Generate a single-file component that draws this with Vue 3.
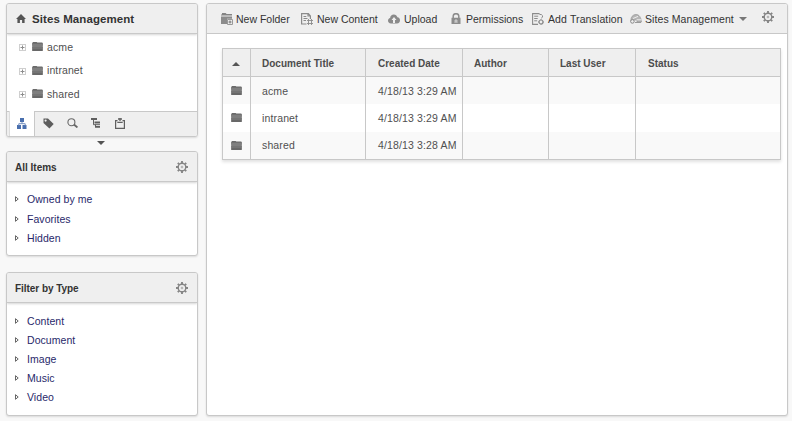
<script setup>
import { h } from 'vue'

const sites = ['acme', 'intranet', 'shared']
const filters = ['Content', 'Document', 'Image', 'Music', 'Video']
const items = ['Owned by me', 'Favorites', 'Hidden']
const rows = [
  { title: 'acme', date: '4/18/13 3:29 AM' },
  { title: 'intranet', date: '4/18/13 3:29 AM' },
  { title: 'shared', date: '4/18/13 3:28 AM' },
]

const Gear = () =>
  h('svg', { width: 12, height: 12, viewBox: '0 0 12 12', fill: 'none', stroke: '#858585' }, [
    h('circle', { cx: 6, cy: 6, r: 3.8, 'stroke-width': 1.4 }),
    h('circle', { cx: 6, cy: 6, r: 0.9, 'stroke-width': 0.6 }),
    h('path', {
      'stroke-width': 1.9,
      d: 'M6 0v2M6 10v2M0 6h2M10 6h2M1.8 1.8l1.3 1.3M8.9 8.9l1.3 1.3M1.8 10.2l1.3-1.3M8.9 3.1l1.3-1.3',
    }),
  ])

const Folder = () =>
  h('svg', { width: 11, height: 9, viewBox: '0 0 11 9' }, [
    h('path', { d: 'M.5 2V.5L1 0h3.6l.7.6H10.4V2z', fill: '#6a6a6a' }),
    h('path', { d: 'M0 1.5h11L10.6 9H.4z', fill: '#7f7f7f' }),
    h('path', { d: 'M0 1.5h11v.6H0z', fill: '#6a6a6a' }),
    h('path', { d: 'M.2 5h10.6l-.1 2H.3z', fill: '#757575' }),
    h('path', { d: 'M.3 7h10.4l-.1 2H.4z', fill: '#686868' }),
  ])
</script>

<template>
  <div class="page">
    <aside class="side">
      <section class="panel sites">
        <header class="head main">
          <svg width="10" height="9" viewBox="0 0 10 9" fill="#555">
            <path d="M5 0l5 5H8.6v4H6.1V6H3.9v3H1.4V5H0z" />
          </svg>
          <h1>Sites Management</h1>
        </header>
        <ul class="tree">
          <li v-for="s in sites" :key="s">
            <svg class="plus" width="7" height="7" viewBox="0 0 7 7">
              <path d="M0 .5h7M0 6.5h7M.5 0v7M6.5 0v7" stroke="#cfcfcf" fill="none" />
              <path d="M1.5 3.5h4M3.5 1.5v4" stroke="#8d8d8d" />
            </svg>
            <Folder />
            <span>{{ s }}</span>
          </li>
        </ul>
        <nav class="tabs">
          <span class="tab active">
            <svg width="10" height="11" viewBox="0 0 10 11" fill="#496fae">
              <path d="M3 0h4v4H3zM0 7h4v4H0zM5.5 7h4v4h-4z" />
              <path d="M5 4v2M1.8 7.5V5.7h6.4v1.8" fill="none" stroke="#7792c0" />
            </svg>
          </span>
          <span class="tab">
            <svg width="11" height="11" viewBox="0 0 11 11">
              <path d="M.5.5H5L10.7 6 6.4 10.6.5 5z" fill="#5d5d5d" />
              <circle cx="2.6" cy="2.6" r="1.1" fill="#efefef" />
            </svg>
          </span>
          <span class="tab">
            <svg width="11" height="10" viewBox="0 0 11 10" fill="none" stroke="#686868">
              <circle cx="4.4" cy="4.2" r="3.5" stroke-width="1.1" />
              <path d="M7 6.5l3.4 3" stroke-width="1.8" />
            </svg>
          </span>
          <span class="tab">
            <svg width="10" height="10" viewBox="0 0 10 10" fill="none" stroke="#5f5f5f">
              <path d="M0 1h6M3.5 4.5H9M4 8.8h5" stroke-width="1.8" />
              <path d="M2.5 1v5.7H9" />
              <path d="M4.5 6.5v2" />
            </svg>
          </span>
          <span class="tab">
            <svg width="10" height="11" viewBox="0 0 10 11" fill="none" stroke="#606060">
              <path d="M2.5 2.6H.6v7.8h8.8V2.6H7.5" stroke-width="1.2" />
              <path d="M3 1h4M5 0v3M2.3 4.3h5.4" stroke-width="1.3" />
            </svg>
          </span>
        </nav>
      </section>
      <div class="fold"><i class="down dark"></i></div>
      <section class="panel items">
        <header class="head"><h2>All Items</h2><Gear /></header>
        <ul class="links">
          <li v-for="t in items" :key="t">
            <svg width="4" height="6" viewBox="0 0 4 6"><path d="M.5.7L3.2 3 .5 5.3z" fill="#fff" stroke="#555" stroke-width=".9" /></svg>
            <a>{{ t }}</a>
          </li>
        </ul>
      </section>
      <section class="panel types">
        <header class="head"><h2>Filter by Type</h2><Gear /></header>
        <ul class="links">
          <li v-for="t in filters" :key="t">
            <svg width="4" height="6" viewBox="0 0 4 6"><path d="M.5.7L3.2 3 .5 5.3z" fill="#fff" stroke="#555" stroke-width=".9" /></svg>
            <a>{{ t }}</a>
          </li>
        </ul>
      </section>
    </aside>

    <main class="panel content">
      <div class="toolbar">
        <span class="tool folder">
          <svg width="12" height="12" viewBox="0 0 12 12">
            <path d="M0 11V3.5h11v2.3H6V11z" fill="#8c8c8c" />
            <path d="M1 0h3.6l1 1H11v1.6H0V1.5h1z" fill="#848484" />
            <path d="M6.5 6.5h5v5h-5z" fill="#eee" stroke="#999" />
            <path d="M7.5 9h3M9 7.5v3" stroke="#777" />
          </svg>
          New Folder
        </span>
        <span class="tool doc">
          <svg width="12" height="12" viewBox="0 0 12 12" fill="none" stroke="#8b8b8b">
            <path d="M5.5 11H.6V.6h6.8L9.4 3v3M7 .6V3h2.4" stroke-width="1.2" />
            <path d="M2.5 3.5h2.8M2.5 5.5h4M2.5 7.5h2.5" />
            <path d="M7.5 6v6M10.5 6v6M6 7.5h6M6 10.5h6" stroke-width=".9" />
          </svg>
          New Content
        </span>
        <span class="tool upload">
          <svg width="12" height="10" viewBox="0 0 12 10">
            <path d="M3 9.5C1 9.5 0 8.2 0 6.6c0-1.4.9-2.3 2.1-2.6C2.3 1.7 3.8.4 5.8.4c1.8 0 3.1 1.1 3.6 2.8C11 3.3 12 4.5 12 6.2c0 1.9-1.1 3.3-3 3.3z" fill="#8a8a8a" />
            <path d="M6 3L3.5 6H5v3h2V6h1.5z" fill="#efefef" />
          </svg>
          Upload
        </span>
        <span class="tool perm">
          <svg width="10" height="11" viewBox="0 0 10 11">
            <path d="M2.2 5V3.2a2.8 2.5 0 015.6 0V5" fill="none" stroke="#8c8c8c" stroke-width="1.5" />
            <path d="M.5 4.7h9V11h-9z" fill="#8c8c8c" />
            <path d="M3 7h4v3H3z" fill="#a9a9a9" />
            <path d="M4.5 6.3h1v3.2h-1z" fill="#e4e4e4" />
          </svg>
          Permissions
        </span>
        <span class="tool trans">
          <svg width="12" height="12" viewBox="0 0 12 12" fill="none" stroke="#8b8b8b">
            <path d="M6 11.4H.6V.6h7" stroke-width="1.1" />
            <path d="M2.2 3.2h4M2.2 5.5h3.5M2.2 7.8h3" />
            <path d="M7.5 1.5h1.8l1.2 1.2v1.5l-1.3 1" />
            <circle cx="9" cy="9" r="2" stroke-width="1.2" />
            <path d="M9 6.2v1M9 10.8v1M6.2 9h1M10.8 9h1" />
          </svg>
          Add Translation
        </span>
        <span class="tool manage">
          <svg width="12" height="10" viewBox="0 0 12 10">
            <path d="M1 7C.5 3 3 .5 6 .5S11 3 11.5 8H7V6H3z" fill="#b5b5b5" stroke="#999" stroke-width=".7" />
            <path d="M3 4.5L8 2.4M6.5 5.8h5" stroke="#eee" />
            <circle cx="2.4" cy="7.4" r="1.8" fill="#eee" stroke="#888" />
            <path d="M5 8.5h6" stroke="#999" />
          </svg>
          Sites Management
          <i class="down"></i>
        </span>
        <Gear class="settings" />
      </div>
      <table>
        <colgroup>
          <col class="c1" /><col class="c2" /><col class="c3" /><col class="c4" /><col class="c5" /><col />
        </colgroup>
        <thead>
          <tr>
            <th class="icon"><i class="up"></i></th>
            <th>Document Title</th>
            <th class="shift">Created Date</th>
            <th>Author</th>
            <th>Last User</th>
            <th class="shift">Status</th>
          </tr>
        </thead>
        <tbody>
          <tr v-for="r in rows" :key="r.title">
            <td class="icon"><Folder /></td>
            <td>{{ r.title }}</td>
            <td class="shift">{{ r.date }}</td>
            <td></td>
            <td></td>
            <td></td>
          </tr>
        </tbody>
      </table>
    </main>
  </div>
</template>

<style>
body {
  background: #f8f8f8;
}
</style>

<style scoped>
* {
  box-sizing: border-box;
}
.page {
  display: flex;
  gap: 8px;
  width: 792px;
  height: 421px;
  padding: 3px 4px 5px 6px;
  background: #f8f8f8;
  font: 10px/12px "Liberation Sans", Arial, sans-serif;
  color: #505050;
}
svg {
  display: block;
  flex: none;
}
ul {
  list-style: none;
  margin: 0;
  padding: 0;
}
.side {
  width: 192px;
  display: flex;
  flex-direction: column;
}
.panel {
  background: #fff;
  border: 1px solid #c8c8c8;
  border-radius: 3px;
  box-shadow: 0 1px 2px rgba(0, 0, 0, 0.12);
  overflow: hidden;
}
.sites {
  height: 134px;
  display: flex;
  flex-direction: column;
}
.head {
  height: 30px;
  display: flex;
  align-items: center;
  justify-content: space-between;
  padding: 1px 9px 0 8px;
  background: #efefef;
  border-bottom: 1px solid #c9c9c9;
  box-shadow: 0 1px 2px rgba(0, 0, 0, 0.16);
}
.head.main {
  justify-content: flex-start;
  gap: 6px;
  padding: 0 9px;
}
h1,
h2 {
  margin: 0;
  color: #333;
}
h1 {
  font-size: 11.5px;
  line-height: 12px;
  letter-spacing: 0.08px;
}
h2 {
  padding-top: 2px;
  font-size: 10px;
  line-height: 12px;
}
.types h2 {
  letter-spacing: -0.05px;
}
.tree {
  padding: 1px 0 0 12px;
  flex: 1;
}
.tree li {
  height: 23.5px;
  display: flex;
  align-items: center;
  font-size: 10.5px;
  letter-spacing: 0.1px;
}
.tree svg + svg {
  margin: 0 4px 0 6px;
}
.plus {
  margin-top: 2px;
}
.tabs {
  display: flex;
  height: 25px;
  padding-left: 2px;
  background: #efefef;
  box-shadow: inset 0 1px #c8c8c8;
}
.tab {
  width: 24px;
  display: flex;
  align-items: center;
  justify-content: center;
}
.tab.active {
  width: 26px;
  margin-right: 1px;
  background: #fff;
  border-right: 1px solid #c8c8c8;
  border-left: 1px solid #ddd;
}
.fold {
  height: 14px;
  display: flex;
  justify-content: center;
  padding: 4px 2px 0 0;
}
.down,
.up {
  display: block;
  width: 0;
  height: 0;
  border: 4px solid transparent;
  border-bottom: 0;
  border-top-color: #777;
}
.down.dark {
  border-top-color: #555;
}
.up {
  border: 4px solid transparent;
  border-top: 0;
  border-bottom-color: #555;
}
.items {
  height: 106px;
}
.types {
  height: 144px;
  margin-top: 16px;
}
.links {
  padding: 8px 0 0 8px;
}
.links li {
  display: flex;
  align-items: center;
  gap: 8px;
  height: 19.3px;
  font-size: 10.5px;
  letter-spacing: 0.05px;
  color: #28286a;
}
.types .links li {
  height: 19px;
}
.content {
  flex: 1;
}
.toolbar {
  height: 30px;
  display: flex;
  align-items: center;
  padding-left: 14px;
  background: #efefef;
  border-bottom: 1px solid #c8c8c8;
}
.tool {
  display: flex;
  align-items: center;
  gap: 3px;
  flex: none;
  white-space: nowrap;
  font-size: 10.5px;
  color: #333;
}
.folder {
  width: 80px;
}
.doc {
  width: 87px;
  gap: 4px;
}
.upload {
  width: 63px;
  gap: 4px;
}
.perm {
  width: 81px;
  gap: 5px;
}
.trans {
  width: 98px;
  gap: 4px;
  letter-spacing: 0.12px;
}
.manage {
  width: 132px;
  gap: 3px;
  letter-spacing: 0.08px;
}
.manage .down {
  margin-left: 2px;
}
.settings {
  margin-top: -3px;
}
table {
  width: 559px;
  margin: 14px 0 0 15px;
  table-layout: fixed;
  border-collapse: collapse;
  border: 1px solid #c8c8c8;
  box-shadow: 0 2px 3px rgba(0, 0, 0, 0.12);
}
.c1 {
  width: 28px;
}
.c2 {
  width: 115px;
}
.c3 {
  width: 97px;
}
.c4 {
  width: 86px;
}
.c5 {
  width: 87px;
}
th,
td {
  padding: 0 0 0 11px;
  border-left: 1px solid #c8c8c8;
  text-align: left;
  white-space: nowrap;
}
th {
  height: 28px;
  padding-top: 2px;
  background: #efefef;
  border-bottom: 1px solid #c8c8c8;
  color: #4c4c4c;
}
td {
  height: 27.5px;
  font-size: 10.5px;
  letter-spacing: 0.14px;
}
.shift {
  padding-left: 12px;
}
tbody tr:nth-child(odd) {
  background: #f9f9f9;
}
th.icon,
td.icon {
  padding-left: 8px;
}
th.icon {
  padding-left: 9px;
}
</style>
